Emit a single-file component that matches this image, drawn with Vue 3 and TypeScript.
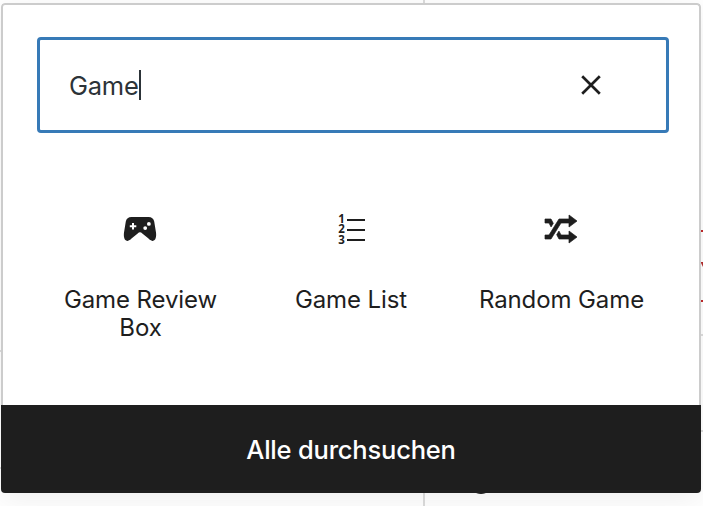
<script setup lang="ts">
import { ref } from 'vue'

interface Block {
  id: 'review' | 'list' | 'random'
  label: string
}

const query = ref<string>('Game')
const blocks: Block[] = [
  { id: 'review', label: 'Game Review Box' },
  { id: 'list', label: 'Game List' },
  { id: 'random', label: 'Random Game' },
]
</script>

<template>
  <main class="canvas">
    <i class="rule column-top"></i>
    <i class="rule column-bottom"></i>
    <i class="rule left-upper"></i>
    <i class="rule left-lower"></i>
    <i class="rule right-upper"></i>
    <i class="rule right-lower"></i>
    <i class="rule error error-top"></i>
    <i class="rule error error-bottom"></i>
    <svg class="error-mark" viewBox="0 0 2 6"><path d="M0 0h2v5L0 1z" fill="#b32d2e" /></svg>
    <i class="hidden-control"></i>

    <section class="inserter">
      <div class="content">
        <div class="search">
          <span class="query">{{ query }}</span>
          <i class="caret"></i>
          <button class="clear" type="button" aria-label="Zurücksetzen" @click="query = ''">
            <svg width="20" height="20" viewBox="0 0 20 20">
              <path d="M1.2 1.2L18.8 18.8M18.8 1.2L1.2 18.8" stroke="#1e1e1e" stroke-width="2.7" />
            </svg>
          </button>
        </div>

        <div class="results">
          <button v-for="block in blocks" :key="block.id" class="block" :class="block.id" type="button">
            <svg v-if="block.id === 'review'" width="40" height="40" viewBox="0 0 40 40" fill="#1e1e1e">
              <path
                fill-rule="evenodd"
                d="M11.500 8h17c3.200 0 5 1.600 5.700 4.400L36 23.500c.5 4-.1 8.100-3.300 8.400-1.700.1-2.900-1-4.200-2.300L22.300 24.400Q20 22.300 17.700 24.400l-6.200 5.200c-1.300 1.300-2.500 2.400-4.200 2.300C4.100 31.600 3.500 27.500 4 23.500l1.800-11.100C6.500 9.600 8.300 8 11.500 8zM12 14v2.200H9.800v2H12v2.300h2v-2.300h2.300v-2H14V14zM28.900 13a1.900 1.900 0 1 0 0 3.800 1.900 1.900 0 0 0 0-3.800zM25.200 17.200a1.900 1.900 0 1 0 0 3.800 1.900 1.900 0 0 0 0-3.800z"
              />
            </svg>
            <svg v-else-if="block.id === 'list'" width="40" height="40" viewBox="0 0 40 40" fill="#1e1e1e">
              <text class="numeral" x="7.200" y="14">1</text>
              <text class="numeral" x="7.200" y="24.300">2</text>
              <text class="numeral" x="7.200" y="34.500">3</text>
              <path d="M16 10h18v2H16zM16 20h18v2H16zM16 30h18v2H16z" />
            </svg>
            <svg v-else width="40" height="40" viewBox="0 0 20 20" fill="#1e1e1e" stroke="#1e1e1e" stroke-width="0.35">
              <path
                d="M18 6.010L14 9V7h-4l-5 8H2v-2h2l5-8h5V3zM2 5h3l1.150 2.170-1.120 1.800L4 7H2V5zm16 9.010L14 17v-2H9l-1.150-2.170 1.120-1.800L10 13h4v-2z"
              />
            </svg>
            <span class="label">{{ block.label }}</span>
          </button>
        </div>
      </div>
      <button class="browse" type="button"><span>Alle durchsuchen</span></button>
    </section>
  </main>
</template>

<style>
body {
  margin: 0;
  overflow: hidden;
}
</style>

<style scoped>
.canvas {
  position: relative;
  box-sizing: border-box;
  width: 703px;
  height: 506px;
  padding: 3px 2px 13px 1px;
  overflow: hidden;
  background: #fff;
  font-family: Inter, "Liberation Sans", sans-serif;
  color: #1e1e1e;
}

button {
  padding: 0;
  border: 0;
  background: none;
  font: inherit;
  color: inherit;
}

.inserter {
  position: relative;
  display: flex;
  flex-direction: column;
  width: 700px;
  height: 490px;
  border-radius: 4px;
  overflow: hidden;
  background: #fff;
  box-shadow: 0 6px 30px rgba(0, 0, 0, 0.07);
}

.content {
  box-sizing: border-box;
  height: 402px;
  padding: 32px 30px 0 34px;
  border: 2px solid #ccc;
  border-bottom: 0;
  border-radius: 4px 4px 0 0;
}

.search {
  box-sizing: border-box;
  display: flex;
  align-items: center;
  width: 632px;
  height: 96px;
  padding: 0 65px 0 29px;
  border: 3px solid #377ab7;
  border-radius: 4px;
}

.query {
  width: 70px;
  padding-top: 2px;
  font-size: 25.5px;
  line-height: 32px;
  letter-spacing: -0.25px;
  color: #2c3338;
  white-space: nowrap;
}

.caret {
  width: 2px;
  height: 30px;
  background: #2c3338;
}

.clear {
  display: flex;
  margin-left: auto;
}

.results {
  display: grid;
  grid-template-columns: 210px 212px 208px;
  margin-top: 76px;
  margin-left: -2px;
}

.block {
  display: flex;
  flex-direction: column;
  align-items: center;
}

.block svg {
  display: block;
}

.numeral {
  font: 700 11.5px "Open Sans", sans-serif;
}

.label {
  box-sizing: border-box;
  width: 180px;
  margin-top: 37px;
  padding-left: 1px;
  font-size: 24px;
  line-height: 28px;
  letter-spacing: -0.1px;
  text-align: center;
}

.list .label {
  padding-left: 0;
}

.browse {
  height: 88px;
  padding-top: 2px;
  background: #1e1e1e;
  color: #fff;
  font-size: 25.5px;
  line-height: 32px;
  letter-spacing: -0.2px;
  font-weight: 500;
}

.rule {
  position: absolute;
  width: 2px;
  height: 2px;
  background: #dcdcdc;
}

.column-top { left: 423px; top: 0; height: 3px; }
.column-bottom { left: 423px; top: 493px; height: 13px; }
.left-upper { left: 0; top: 350px; }
.left-lower { left: 0; top: 467px; }
.right-upper { left: 701px; top: 334px; }
.right-lower { left: 701px; top: 430px; }
.error { background: #c0292b; }
.error-top { left: 701px; top: 230px; }
.error-bottom { left: 701px; top: 300px; }

.error-mark {
  position: absolute;
  left: 701px;
  top: 262px;
  width: 2px;
  height: 6px;
}

.hidden-control {
  position: absolute;
  left: 470px;
  top: 472px;
  width: 22px;
  height: 22px;
  border-radius: 50%;
  background: #1e1e1e;
}
</style>
